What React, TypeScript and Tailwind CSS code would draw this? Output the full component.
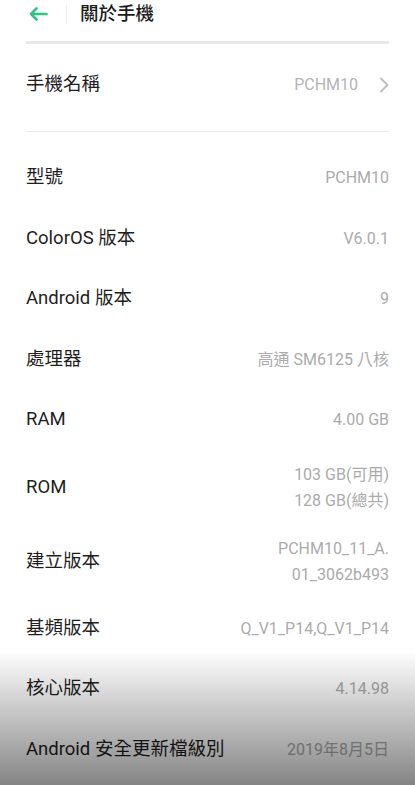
const rows: { label: string; value: string[] }[] = [
  { label: '型號', value: ['PCHM10'] },
  { label: 'ColorOS 版本', value: ['V6.0.1'] },
  { label: 'Android 版本', value: ['9'] },
  { label: '處理器', value: ['高通 SM6125 八核'] },
  { label: 'RAM', value: ['4.00 GB'] },
  { label: 'ROM', value: ['103 GB(可用)', '128 GB(總共)'] },
  { label: '建立版本', value: ['PCHM10_11_A.', '01_3062b493'] },
  { label: '基頻版本', value: ['Q_V1_P14,Q_V1_P14'] },
  { label: '核心版本', value: ['4.14.98'] },
  { label: 'Android 安全更新檔級別', value: ['2019年8月5日'] },
];

const font = { fontFamily: 'Roboto, "Noto Sans CJK TC", sans-serif' };

export default function App() {
  return (
    <div className="relative w-[415px] h-[785px] overflow-hidden bg-white" style={font}>
      {/* header */}
      <div className="flex items-center h-[28px] pl-[29px]">
        <svg width="19" height="14" viewBox="0 0 19 14" fill="none" stroke="#2fc584" strokeWidth="2.6" strokeLinecap="round" strokeLinejoin="round">
          <path d="M17.5 7H2M7.5 1.5L2 7l5.5 5.5" />
        </svg>
        <div className="w-px h-[19px] bg-[#ececec] ml-[18px]" />
        <h1 className="ml-[13px] text-[18.5px] text-[#1c1c1c] font-medium leading-none">關於手機</h1>
      </div>

      <div className="mx-[26px] mt-[13px] h-[3px] bg-[#e9e9e9]" />

      <div className="mx-[26px] flex items-center justify-between h-[88px] pb-[6px] border-b border-[#e8e8e8]">
        <span className="text-[18.5px] text-[#1e1e1e]">手機名稱</span>
        <div className="flex items-center">
          <span className="text-[16px] text-[#b4b4b4]">PCHM10</span>
          <svg className="ml-[21px]" width="10" height="16" viewBox="0 0 10 16" fill="none" stroke="#bdbdbd" strokeWidth="1.8" strokeLinecap="round" strokeLinejoin="round">
            <path d="M2 1.5L8.5 8 2 14.5" />
          </svg>
        </div>
      </div>

      <div className="mt-[16px] mx-[26px]">
        {rows.map((r) => (
          <div
            key={r.label}
            className={`flex items-center justify-between ${r.value.length > 1 ? 'h-[74px]' : 'h-[60.5px]'}`}
          >
            <span className="text-[18.5px] text-[#1e1e1e] whitespace-nowrap">{r.label}</span>
            <div className="text-right text-[16px] leading-[26px] text-[#ababab]">
              {r.value.map((v) => (
                <div key={v}>{v}</div>
              ))}
            </div>
          </div>
        ))}
      </div>

      <div className="pointer-events-none absolute left-0 right-0 bottom-0 h-[135px] bg-gradient-to-b from-transparent to-black/[0.48]" />
    </div>
  );
}
